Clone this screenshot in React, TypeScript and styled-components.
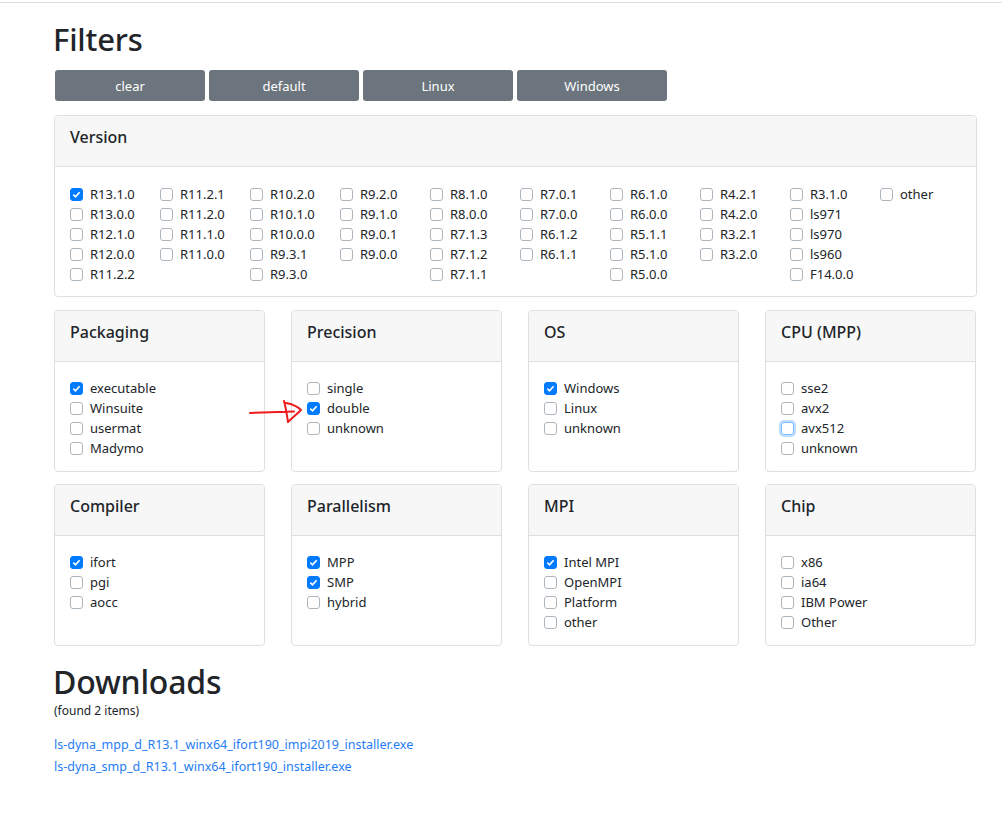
import React from "react";
import styled, { createGlobalStyle } from "styled-components";

const GlobalStyle = createGlobalStyle`
	html, body {
		margin: 0;
		padding: 0;
		background: #fff;
	}
	body {
		font-family: "Noto Sans", "Open Sans", sans-serif;
		color: #212529;
		font-size: 13px;
	}
`;

const TopRule = styled.div`
	margin-top: 2px;
	border-top: 1px solid #dddddd;
`;

const Page = styled.div`
	position: relative;
	width: 923px;
	padding: 16px 0 40px 54px;
`;

const Title = styled.h1`
	margin: 0 0 0 -1px;
	font-size: 31px;
	font-weight: 500;
	line-height: 40px;
	letter-spacing: -0.2px;
`;

const ButtonBar = styled.div`
	display: flex;
	gap: 4px;
	margin: 11px 0 0 1px;
`;

const GreyButton = styled.button`
	width: 150px;
	height: 31px;
	border: none;
	border-radius: 3px;
	background: #6c757d;
	color: #fff;
	font-family: inherit;
	font-size: 13px;
	cursor: pointer;
`;

const Card = styled.section`
	border: 1px solid #dfdfdf;
	border-radius: 4px;
	background: #fff;
`;

const CardHeader = styled.header`
	box-sizing: border-box;
	height: 51px;
	display: flex;
	align-items: center;
	padding: 0 15px 8px;
	background: #f7f7f7;
	border-bottom: 1px solid #dfdfdf;
	border-radius: 3px 3px 0 0;
	font-size: 16px;
	font-weight: 500;
`;

const CardBody = styled.div<{ $top: number; $bottom: number }>`
	padding: ${(p) => p.$top}px 15px ${(p) => p.$bottom}px;
`;

const VersionCard = styled(Card)`
	margin-top: 14px;
`;

const VersionGrid = styled.div`
	display: flex;
`;

const VersionColumn = styled.div`
	width: 90px;
	flex-shrink: 0;
	display: flex;
	flex-direction: column;
`;

const CardGrid = styled.div`
	display: grid;
	grid-template-columns: repeat(4, 211px);
	column-gap: 26px;
	row-gap: 12px;
	margin-top: 13px;
`;

const Option = styled.label`
	display: flex;
	align-items: center;
	height: 20px;
	white-space: nowrap;
	font-size: 13px;
`;

const Box = styled.span<{ $checked?: boolean; $focus?: boolean }>`
	width: 13px;
	height: 13px;
	box-sizing: border-box;
	border-radius: 3px;
	margin-right: 7px;
	flex-shrink: 0;
	display: flex;
	align-items: center;
	justify-content: center;
	border: 1px solid ${(p) => (p.$checked ? "#007bff" : p.$focus ? "#80bdff" : "#adb5bd")};
	background: ${(p) => (p.$checked ? "#007bff" : "#fff")};
	box-shadow: ${(p) => (p.$focus ? "0 0 0 2px rgba(0, 123, 255, 0.25)" : "none")};
`;

const Heading2 = styled.h2`
	margin: 19px 0 0 -1px;
	font-size: 32px;
	font-weight: 500;
	line-height: 34px;
	letter-spacing: -0.2px;
`;

const Found = styled.div`
	margin-top: 4px;
	font-size: 12px;
	line-height: 16px;
`;

const Links = styled.div`
	margin-top: 15px;
	display: flex;
	flex-direction: column;
`;

const FileLink = styled.a`
	color: #1f7cf5;
	text-decoration: none;
	font-size: 12.5px;
	line-height: 22px;
`;

const Annotation = styled.svg`
	position: absolute;
	left: 246px;
	top: 393px;
	pointer-events: none;
`;

type Item = { label: string; checked?: boolean; focus?: boolean };

const Check = ({ item }: { item: Item }) => (
	<Option>
		<Box $checked={item.checked} $focus={item.focus}>
			{item.checked && (
				<svg width="9" height="9" viewBox="0 0 8 8">
					<path d="M1.2 4.2 L3.1 6 L6.8 2" fill="none" stroke="#fff" strokeWidth="1.5" />
				</svg>
			)}
		</Box>
		{item.label}
	</Option>
);

const versions: string[][] = [
	["R13.1.0", "R13.0.0", "R12.1.0", "R12.0.0", "R11.2.2"],
	["R11.2.1", "R11.2.0", "R11.1.0", "R11.0.0"],
	["R10.2.0", "R10.1.0", "R10.0.0", "R9.3.1", "R9.3.0"],
	["R9.2.0", "R9.1.0", "R9.0.1", "R9.0.0"],
	["R8.1.0", "R8.0.0", "R7.1.3", "R7.1.2", "R7.1.1"],
	["R7.0.1", "R7.0.0", "R6.1.2", "R6.1.1"],
	["R6.1.0", "R6.0.0", "R5.1.1", "R5.1.0", "R5.0.0"],
	["R4.2.1", "R4.2.0", "R3.2.1", "R3.2.0"],
	["R3.1.0", "ls971", "ls970", "ls960", "F14.0.0"],
	["other"],
];

const groups: { title: string; items: Item[] }[] = [
	{
		title: "Packaging",
		items: [{ label: "executable", checked: true }, { label: "Winsuite" }, { label: "usermat" }, { label: "Madymo" }],
	},
	{ title: "Precision", items: [{ label: "single" }, { label: "double", checked: true }, { label: "unknown" }] },
	{ title: "OS", items: [{ label: "Windows", checked: true }, { label: "Linux" }, { label: "unknown" }] },
	{
		title: "CPU (MPP)",
		items: [{ label: "sse2" }, { label: "avx2" }, { label: "avx512", focus: true }, { label: "unknown" }],
	},
	{ title: "Compiler", items: [{ label: "ifort", checked: true }, { label: "pgi" }, { label: "aocc" }] },
	{
		title: "Parallelism",
		items: [{ label: "MPP", checked: true }, { label: "SMP", checked: true }, { label: "hybrid" }],
	},
	{
		title: "MPI",
		items: [{ label: "Intel MPI", checked: true }, { label: "OpenMPI" }, { label: "Platform" }, { label: "other" }],
	},
	{ title: "Chip", items: [{ label: "x86" }, { label: "ia64" }, { label: "IBM Power" }, { label: "Other" }] },
];

const downloads = [
	"ls-dyna_mpp_d_R13.1_winx64_ifort190_impi2019_installer.exe",
	"ls-dyna_smp_d_R13.1_winx64_ifort190_installer.exe",
];

export default function App() {
	return (
		<>
			<GlobalStyle />
			<TopRule />
			<Page>
				<Title>Filters</Title>
				<ButtonBar>
					<GreyButton>clear</GreyButton>
					<GreyButton>default</GreyButton>
					<GreyButton>Linux</GreyButton>
					<GreyButton>Windows</GreyButton>
				</ButtonBar>

				<VersionCard>
					<CardHeader>Version</CardHeader>
					<CardBody $top={17} $bottom={12}>
						<VersionGrid>
							{versions.map((col, i) => (
								<VersionColumn key={i}>
									{col.map((v) => (
										<Check key={v} item={{ label: v, checked: v === "R13.1.0" }} />
									))}
								</VersionColumn>
							))}
						</VersionGrid>
					</CardBody>
				</VersionCard>

				<CardGrid>
					{groups.map((g) => (
						<Card key={g.title}>
							<CardHeader>{g.title}</CardHeader>
							<CardBody $top={16} $bottom={13}>
								{g.items.map((it) => (
									<Check key={it.label} item={it} />
								))}
							</CardBody>
						</Card>
					))}
				</CardGrid>

				<Heading2>Downloads</Heading2>
				<Found>(found 2 items)</Found>
				<Links>
					{downloads.map((d) => (
						<FileLink key={d} href="#">
							{d}
						</FileLink>
					))}
				</Links>

				<Annotation width="60" height="30" viewBox="0 0 60 30">
					<path
						d="M4 17 C 18 16.5, 32 16, 48 15.5 M38 5 C 40 12, 41 20, 42 26 C 46 22, 51 18, 55 14 C 51 10, 46 8, 40 7"
						fill="none"
						stroke="#ee1c1c"
						strokeWidth="2"
						strokeLinecap="round"
						strokeLinejoin="round"
					/>
				</Annotation>
			</Page>
		</>
	);
}
